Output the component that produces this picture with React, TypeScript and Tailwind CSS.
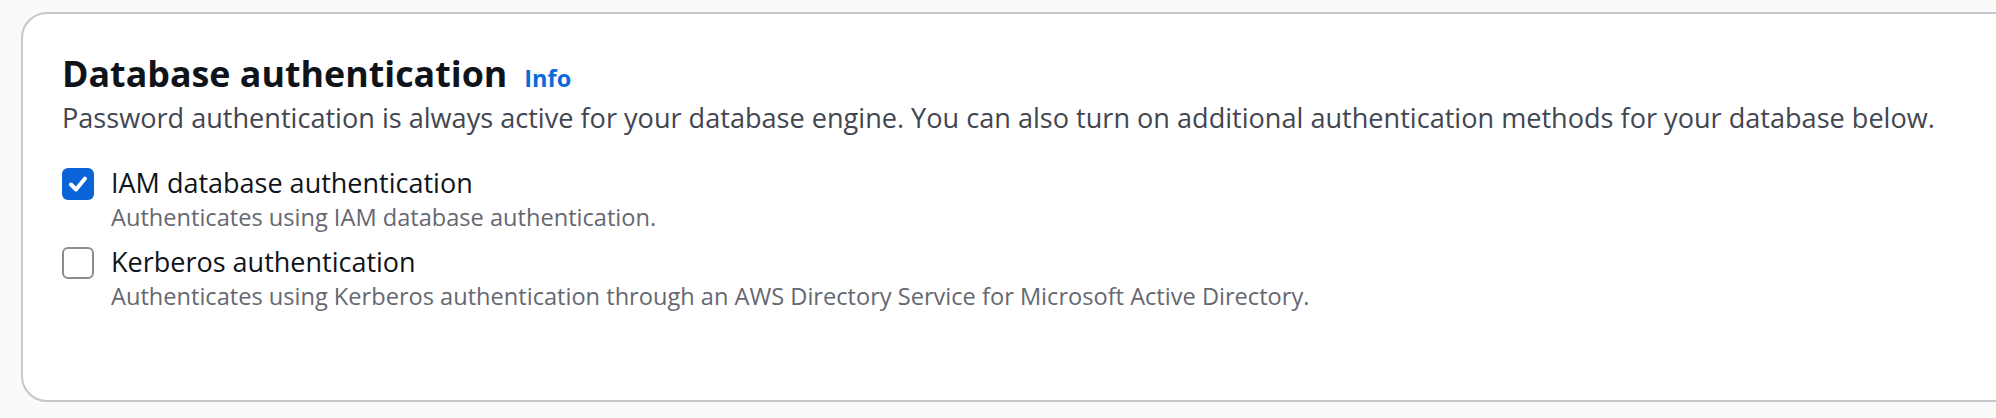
const options = [
  {
    label: 'IAM database authentication',
    description: 'Authenticates using IAM database authentication.',
    checked: true,
  },
  {
    label: 'Kerberos authentication',
    description:
      'Authenticates using Kerberos authentication through an AWS Directory Service for Microsoft Active Directory.',
    checked: false,
  },
];

function Checkbox({ checked }: { checked: boolean }) {
  if (checked) {
    return (
      <span className="mt-[3px] flex h-[32px] w-[32px] shrink-0 items-center justify-center rounded-[6px] bg-[#0b63d8]">
        <svg width="24" height="24" viewBox="0 0 24 24" fill="none">
          <path
            d="M5 12.5 L10 17.5 L19 6.5"
            stroke="white"
            strokeWidth="4"
            strokeLinecap="round"
            strokeLinejoin="round"
          />
        </svg>
      </span>
    );
  }
  return (
    <span className="mt-[3px] block h-[32px] w-[32px] shrink-0 rounded-[6px] border-[2px] border-[#8c8c94] bg-white" />
  );
}

export default function App() {
  return (
    <div
      className="h-[418px] w-full overflow-hidden bg-[#fafafa] pl-[21px] pt-[12px]"
      style={{ fontFamily: '"Open Sans", "Noto Sans", sans-serif' }}
    >
      <div className="w-[2100px] rounded-[26px] border-[2px] border-[#c6c6cd] bg-white pb-[88px] pl-[39px] pt-[37px]">
        {/* Header */}
        <div className="flex items-baseline gap-[17px]">
          <h2 className="text-[35.8px] font-bold leading-[44px] text-[#0f141a]">Database authentication</h2>
          <a className="text-[23.5px] font-bold leading-[44px] text-[#0b6bd8]">Info</a>
        </div>
        <p className="text-[27.1px] leading-[36px] text-[#424650]">
          Password authentication is always active for your database engine. You can also turn on additional
          authentication methods for your database below.
        </p>

        {/* Options */}
        <div className="mt-[29px] flex flex-col gap-[11px]">
          {options.map((o) => (
            <label key={o.label} className="flex gap-[17px]">
              <Checkbox checked={o.checked} />
              <div className="flex flex-col">
                <span className="text-[27px] leading-[36px] text-[#0f141a]">{o.label}</span>
                <span className="text-[23.6px] leading-[32px] text-[#656871]">{o.description}</span>
              </div>
            </label>
          ))}
        </div>
      </div>
    </div>
  );
}
